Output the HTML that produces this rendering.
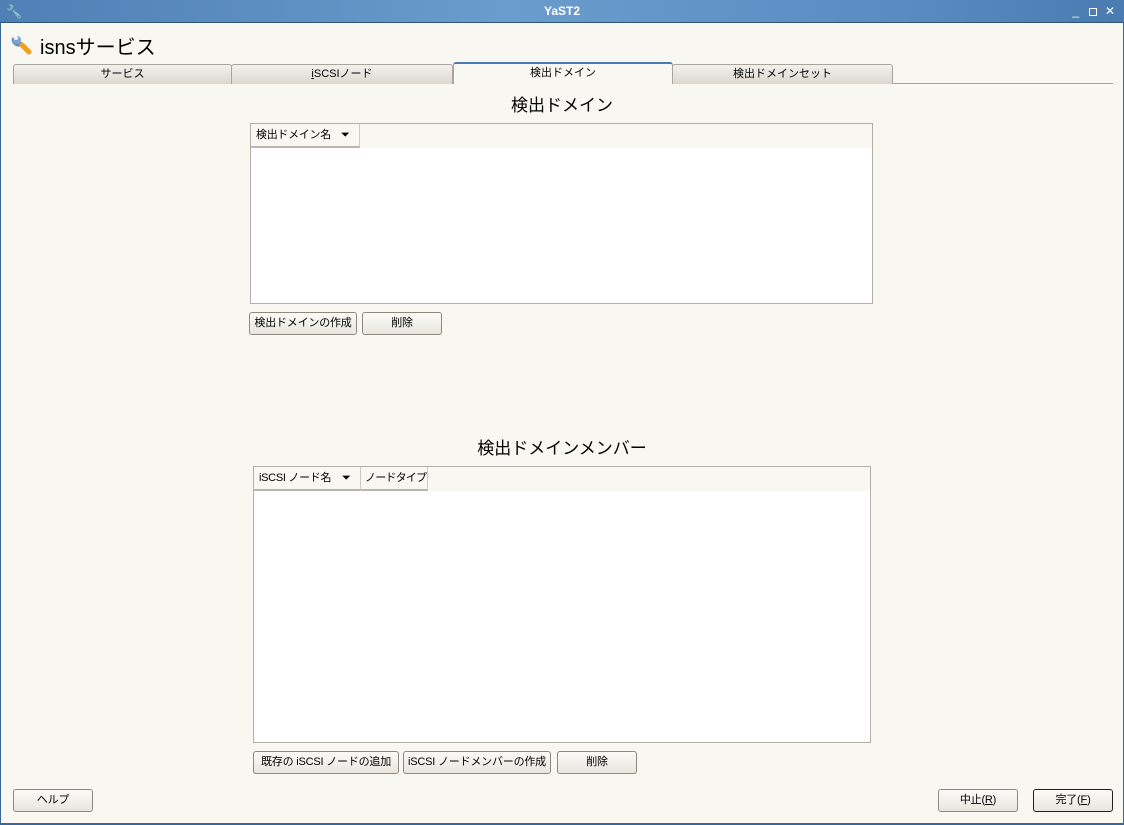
<!DOCTYPE html>
<html><head><meta charset="utf-8"><style>
*{box-sizing:border-box;margin:0;padding:0}
body{width:1124px;height:825px;overflow:hidden;background:#f9f7f2;font-family:"Liberation Sans","Noto Sans CJK JP",sans-serif;font-size:12px;color:#000;position:relative;white-space:nowrap}
.title{position:absolute;left:0;top:0;width:1124px;height:23px;background:linear-gradient(90deg,#4f7fb4,#6a9ccd 45%,#5a8cc2 80%,#4a7bb0);border-bottom:1px solid #2d5580;color:#fff;font-weight:bold;font-size:12px;text-align:center;line-height:23px}
.a{position:absolute}
.tab{position:absolute;top:64px;height:20px;border:1px solid #a9a59c;border-bottom:none;border-radius:3px 3px 0 0;background:linear-gradient(#f3f1ec,#dcd8d0);text-align:center;font-size:11px;line-height:18px}
.btn{position:absolute;height:23px;border:1px solid #8d897f;border-radius:3px;background:linear-gradient(#fbfaf7,#e9e6df);text-align:center;font-size:11px;line-height:21px;overflow:hidden;letter-spacing:-0.2px}
h2{position:absolute;font-weight:normal;font-size:17px;width:1124px;text-align:center;left:0}
.tbl{position:absolute;background:#fff;border:1px solid #b3afa7}
.hdr{position:absolute;left:0;top:0;right:0;height:24px;background:#f9f7f2}
.hc{position:absolute;top:0;height:24px;border-right:1px solid #cfcbc3;border-bottom:2px solid #b9b5ad;font-size:11px;line-height:23px;padding-left:5px;background:#f9f7f2;overflow:hidden;letter-spacing:-0.3px}
</style></head><body>
<div class="title">YaST2
<span class="a" style="left:6px;top:0;font-size:13px">🔧</span>
<span class="a" style="right:45px;top:0;font-weight:normal">_</span>
<span class="a" style="right:27px;top:8px;width:8px;height:8px;border:1px solid #fff"></span>
<span class="a" style="right:9px;top:0;font-weight:normal">✕</span>
</div>
<div class="a" style="left:0;top:23px;width:1px;height:802px;background:#3a679a"></div>
<div class="a" style="right:0;top:23px;width:1px;height:802px;background:#3a679a"></div>
<div class="a" style="left:0;bottom:0;width:1124px;height:2px;background:#3a679a"></div>
<svg class="a" style="left:11px;top:33px" width="22" height="22" viewBox="0 0 22 22"><path d="M3 5 A5 5 0 0 0 10 11 L16 18" stroke="#6a8fc0" stroke-width="4" fill="none"/><circle cx="6" cy="7" r="4" fill="#7ea4d4"/><circle cx="5" cy="5" r="2" fill="#f9f7f2"/><path d="M11 12 L18 19" stroke="#f0a020" stroke-width="5" stroke-linecap="round"/></svg>
<div class="a" style="left:40px;top:31px;font-size:20px">isnsサービス</div>
<div class="a" style="left:13px;top:83px;width:1100px;height:1px;background:#a9a59c"></div>
<div class="tab" style="left:13px;width:219px">サービス</div>
<div class="tab" style="left:231px;width:222px"><u>i</u>SCSIノード</div>
<div class="tab" style="left:453px;top:62px;height:22px;width:220px;background:#f9f7f2;border-top:2px solid #4a7bb0">検出ドメイン</div>
<div class="tab" style="left:672px;width:221px">検出ドメインセット</div>
<h2 style="top:91px">検出ドメイン</h2>
<div class="tbl" style="left:250px;top:123px;width:623px;height:181px"><div class="hdr"></div><div class="hc" style="left:0;width:109px">検出ドメイン名<span style="position:absolute;left:90px">⏷</span></div></div>
<div class="btn" style="left:249px;top:312px;width:108px">検出ドメインの作成</div>
<div class="btn" style="left:362px;top:312px;width:80px">削除</div>
<h2 style="top:434px">検出ドメインメンバー</h2>
<div class="tbl" style="left:253px;top:466px;width:618px;height:277px"><div class="hdr"></div><div class="hc" style="left:0;width:107px">iSCSI ノード名<span style="position:absolute;left:88px">⏷</span></div><div class="hc" style="left:107px;width:67px;padding-left:4px;letter-spacing:-0.8px">ノードタイプ</div></div>
<div class="btn" style="left:253px;top:751px;width:146px">既存の iSCSI ノードの追加</div>
<div class="btn" style="left:403px;top:751px;width:148px">iSCSI ノードメンバーの作成</div>
<div class="btn" style="left:557px;top:751px;width:80px">削除</div>
<div class="btn" style="left:13px;top:789px;width:80px">ヘルプ</div>
<div class="btn" style="left:938px;top:789px;width:80px">中止(<u>R</u>)</div>
<div class="btn" style="left:1033px;top:789px;width:80px;border-color:#222">完了(<u>F</u>)</div>
</body></html>
